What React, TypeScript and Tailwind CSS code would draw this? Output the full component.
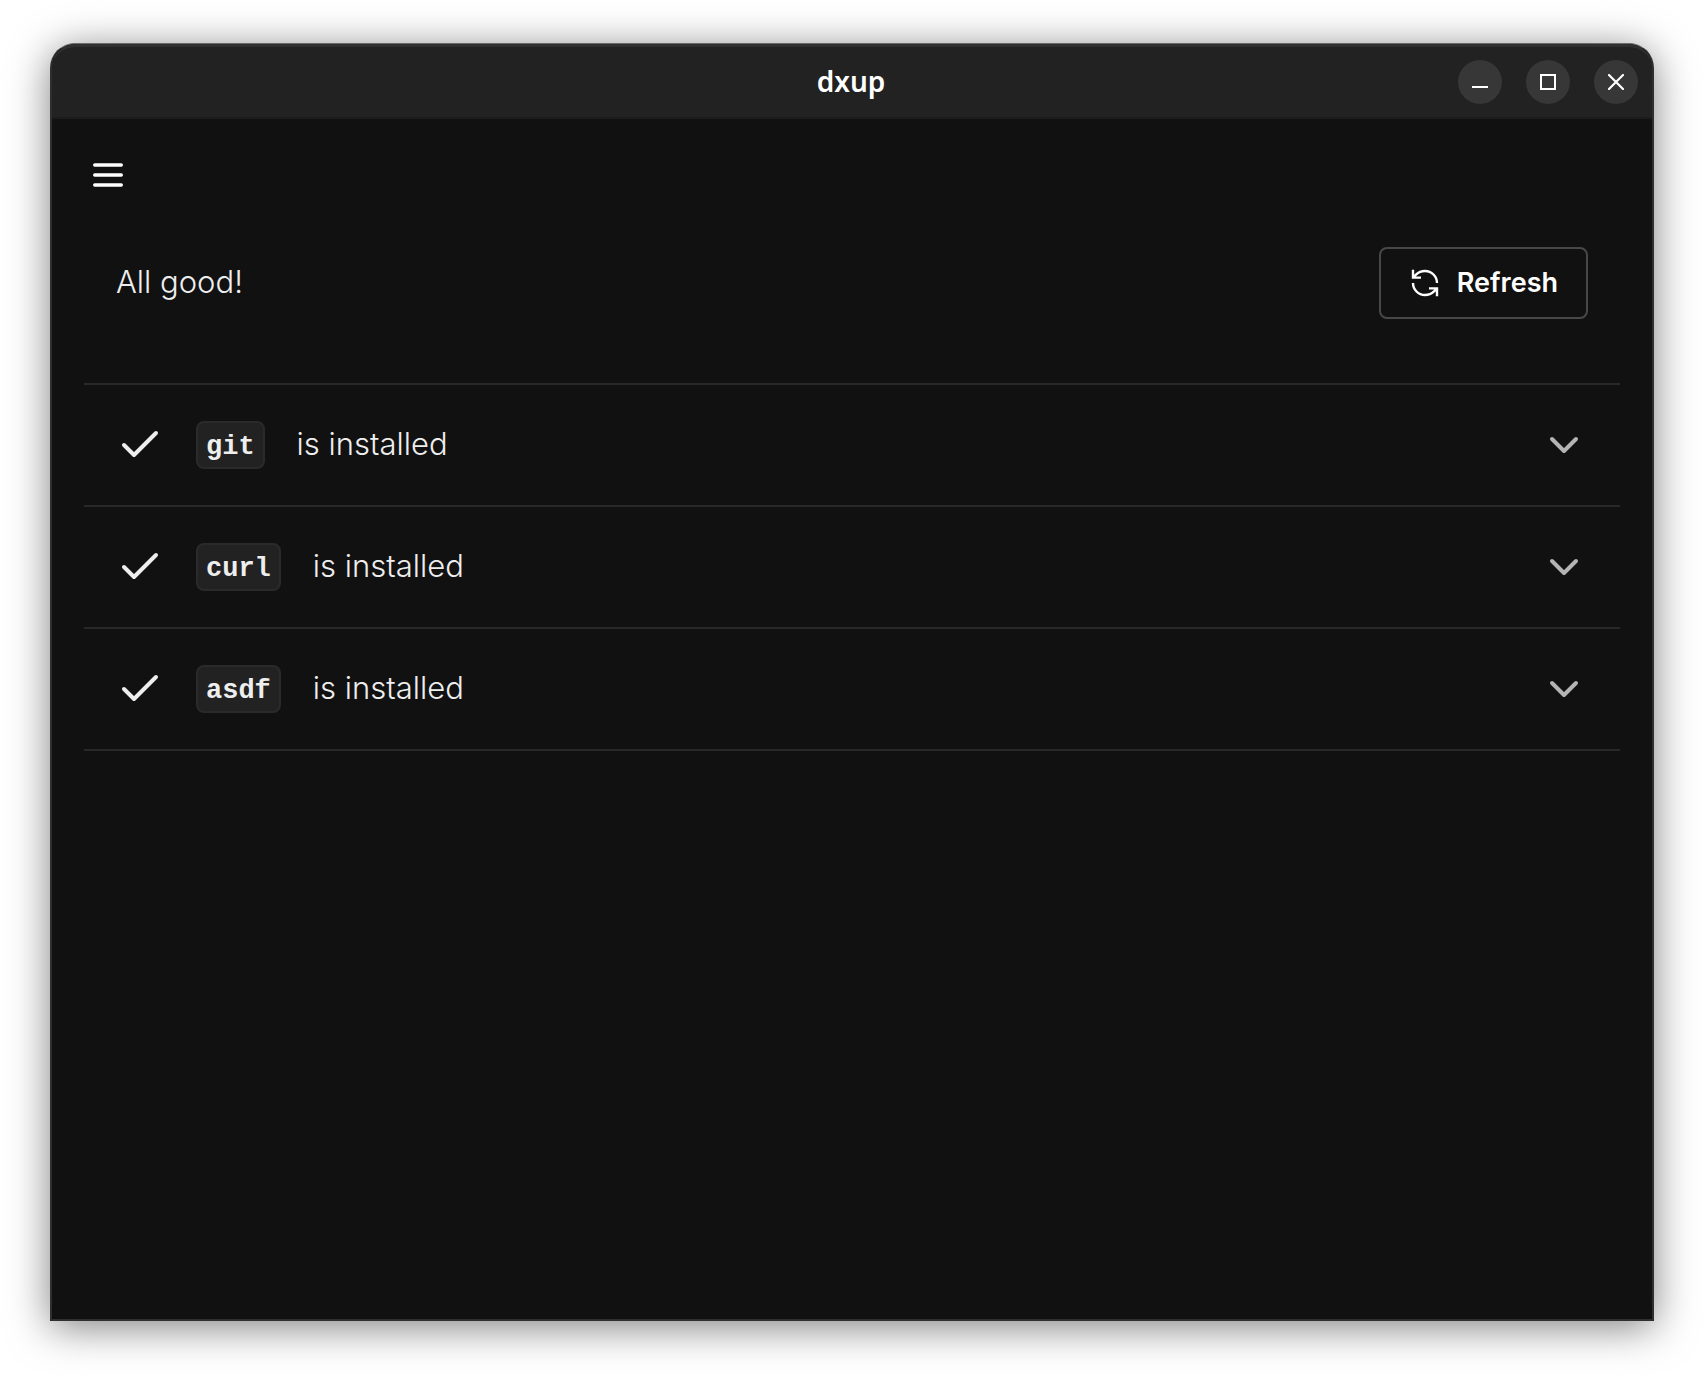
import React from "react";

const tools = ["git", "curl", "asdf"];

const windowButton =
  "flex size-11 items-center justify-center rounded-full bg-[#373737] text-white";

function TitleBar() {
  return (
    <header className="grid h-[75px] grid-cols-[1fr_auto_1fr] items-center rounded-t-3xl border-t-3 border-b-2 border-t-[#303030] border-b-[#1c1c1c] bg-[#222222] pr-3.5">
      <h1 className="col-start-2 pb-0.5 pl-3 font-['Noto_Sans',sans-serif] text-[28px] leading-10 font-semibold text-white">
        dxup
      </h1>
      <div className="flex justify-end gap-6">
        <button type="button" aria-label="Minimize" className={windowButton}>
          <svg width="16" height="16" viewBox="0 0 16 16" stroke="currentColor" strokeWidth="2">
            <path d="M0 13H16" />
          </svg>
        </button>
        <button type="button" aria-label="Maximize" className={windowButton}>
          <svg width="16" height="16" viewBox="0 0 16 16" fill="none" stroke="currentColor" strokeWidth="2">
            <path d="M1 1H15V15H1Z" />
          </svg>
        </button>
        <button type="button" aria-label="Close" className={windowButton}>
          <svg width="16" height="16" viewBox="0 0 16 16" stroke="currentColor" strokeWidth="2.2" strokeLinecap="round">
            <path d="M1 1L15 15M15 1L1 15" />
          </svg>
        </button>
      </div>
    </header>
  );
}

function ToolRow({ name }: { name: string }) {
  return (
    <li className="border-b-2 border-[#282828]">
      <button type="button" aria-expanded="false" className="flex h-[120px] w-full items-center px-8 text-left">
        <svg className="mr-8 shrink-0" width="48" height="48" viewBox="0 0 48 48" fill="none" stroke="#eeeeee" strokeWidth="4" strokeLinecap="round" strokeLinejoin="round">
          <path d="M8 24L18 34L40 12" />
        </svg>
        <code className="mr-8 rounded-lg border-2 border-[#2a2a2a] bg-[#222222] px-2 pt-1 font-['Liberation_Mono',monospace] text-[27px] leading-10 font-bold text-[#eeeeee]">
          {name}
        </code>
        <span className="flex-1 pb-0.5 font-['Inter',sans-serif] text-[31px] leading-10 font-light">is installed</span>
        <svg width="48" height="48" viewBox="0 0 48 48" fill="none" stroke="#b4b4b4" strokeWidth="4" strokeLinecap="round" strokeLinejoin="round">
          <path d="M12 18L24 30L36 18" />
        </svg>
      </button>
    </li>
  );
}

export default function App() {
  return (
    <div className="flex min-h-screen flex-col bg-white px-[50px] pt-[43px] pb-[57px]">
      <div className="flex flex-1 flex-col rounded-t-[25px] border-x-2 border-t border-b-2 border-[#2f2f2f] border-t-[#6b6b6b] bg-[#111111] text-[#eeeeee] shadow-[0_6px_40px_rgba(0,0,0,0.5)]">
        <TitleBar />
        <main className="flex flex-1 flex-col px-8">
          <button type="button" aria-label="Menu" className="mt-8 flex size-12 items-center justify-center">
            <svg width="30" height="24" viewBox="0 0 30 24" stroke="#ffffff" strokeWidth="3.4" strokeLinecap="round">
              <path d="M1.7 2H28.3M1.7 12H28.3M1.7 22H28.3" />
            </svg>
          </button>
          <div className="mt-12 flex items-center justify-between px-8">
            <p className="pb-0.5 font-['Inter',sans-serif] text-[31px] leading-10 font-light">All good!</p>
            <button type="button" className="flex h-[72px] items-center gap-4 rounded-lg border-2 border-[#484848] px-7 font-['Inter',sans-serif] text-[27px] font-semibold text-white">
              <svg width="32" height="32" viewBox="0 0 24 24" fill="none" stroke="currentColor" strokeWidth="1.8">
                <path d="M21 12a9 9 0 0 0-9-9 9.75 9.75 0 0 0-6.74 2.74L3 8M3 2v6h6M3 12a9 9 0 0 0 9 9 9.75 9.75 0 0 0 6.74-2.74L21 16M15 16h6v6" />
              </svg>
              Refresh
            </button>
          </div>
          <ul className="mt-16 border-t-2 border-[#282828]">
            {tools.map((name) => (
              <ToolRow key={name} name={name} />
            ))}
          </ul>
        </main>
      </div>
    </div>
  );
}
